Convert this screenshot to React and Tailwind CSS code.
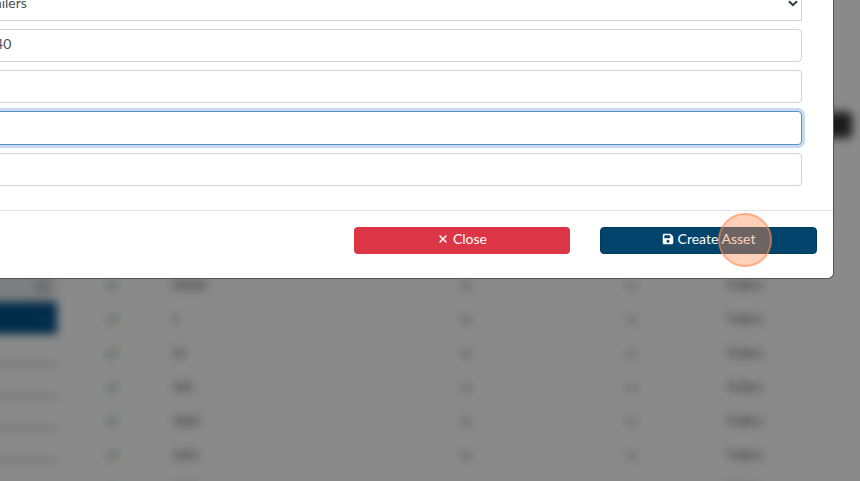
import React from 'react';
import { FaCheck } from 'react-icons/fa';
import { FaFloppyDisk, FaXmark } from 'react-icons/fa6';

const assets = [
  { id: '00000', type: 'Trailers' },
  { id: '1', type: 'Trailers' },
  { id: '10', type: 'Trailers' },
  { id: '100', type: 'Trailers' },
  { id: '1000', type: 'Trailers' },
  { id: '1001', type: 'Trailers' },
  { id: '1002', type: 'Trailers' },
];

const inputClass = 'block w-full h-[33px] px-3 pb-1 rounded border border-[#ced4da] bg-white text-sm text-[#495057] outline-none';

const Sidebar = () => (
  <nav className="-ml-4 w-[73px] shrink-0 pt-0.5 text-xs text-right">
    <a href="#all" className="block h-8 px-2 leading-8 bg-[#e6eaee] text-[#666]">All</a>
    <a href="#assets" className="block h-8 px-2 leading-8 bg-[#005088] text-[#2f6b98]">12</a>
    <a href="#units" className="block h-8 border-b-2 border-[#aaa]" aria-label="Units"></a>
    <a href="#drivers" className="block h-8 border-b-2 border-[#aaa]" aria-label="Drivers"></a>
    <a href="#sites" className="block h-8 border-b-2 border-[#aaa]" aria-label="Sites"></a>
    <a href="#reports" className="block h-8 border-b-2 border-[#aaa]" aria-label="Reports"></a>
  </nav>
);

const AssetTable = () => (
  <table className="flex-1 mx-2 table-fixed border-collapse text-xs text-[#333]">
    <colgroup>
      <col className="w-[12%]" />
      <col className="w-[28%]" />
      <col className="w-[22%]" />
      <col className="w-[20%]" />
      <col className="w-[18%]" />
    </colgroup>
    <tbody>
      {assets.map((asset) => (
        <tr key={asset.id} className="h-[34px] border-b border-[#eee]">
          <td className="border-r border-[#eee]"><FaCheck className="mx-auto size-3 text-[#5cb270]" /></td>
          <td className="border-r border-[#eee] px-3">{asset.id}</td>
          <td className="border-r border-[#eee] text-center text-[#777]">no</td>
          <td className="border-r border-[#eee] text-center text-[#888]">no</td>
          <td className="border-r border-[#eee] px-4">{asset.type}</td>
        </tr>
      ))}
    </tbody>
  </table>
);

const AssetDialog = () => (
  <div role="dialog" aria-label="Create Asset" className="-mt-3 -ml-[58px] mr-[26px] rounded-md border border-t-0 border-[#555] bg-white">
    <form className="flex flex-col gap-2 px-[31px] pb-6">
      <div className="relative">
        <select aria-label="Asset Type" className="block w-full h-[33px] px-2 pb-1 appearance-none border border-[#ced4da] bg-white text-sm text-[#495057] outline-none">
          <option>Trailers</option>
        </select>
        <svg viewBox="0 0 10 7" className="absolute right-1 top-3 w-[10px] h-[7px] pointer-events-none" fill="none" stroke="#343a40" strokeWidth="2">
          <path d="M1 1.2 5 5.2 9 1.2" />
        </svg>
      </div>
      <input aria-label="Asset Number" defaultValue="140" className={inputClass} />
      <input aria-label="Make" className={inputClass} />
      <input aria-label="Model" className="block w-full h-[34px] px-3 pb-1 rounded border border-[#5b93cc] bg-white text-sm text-[#495057] outline-none ring-3 ring-[#c8dbee]" />
      <input aria-label="Year" className={inputClass} />
    </form>
    <div className="flex justify-end gap-[30px] border-t border-[#dee2e6] px-4 pt-4 pb-6">
      <button type="button" className="flex w-[216px] h-[27px] items-center justify-center gap-1 rounded bg-[#dc3545] pb-1 text-sm text-white">
        <FaXmark className="size-3" />
        Close
      </button>
      <button type="button" className="relative flex w-[217px] h-[27px] items-center justify-center gap-1 rounded border border-[#003b60] bg-[#02446c] pb-1 text-sm text-white">
        <FaFloppyDisk className="size-3" />
        Create Asset
        <span className="absolute -top-[15px] right-11 size-[54px] rounded-full border-2 border-[#ff8a47]/50 bg-[#ff8f58]/42"></span>
      </button>
    </div>
  </div>
);

const App = () => {
  return (
    <div className="relative h-screen overflow-hidden bg-white font-['Lato',sans-serif]">
      <div className="flex flex-col blur-[5px]">
        <div className="flex h-[268px] justify-end px-2 pt-28">
          <button type="button" aria-label="Add" className="h-[26px] w-24 rounded bg-[#333]"></button>
        </div>
        <div className="flex items-start">
          <Sidebar />
          <AssetTable />
        </div>
      </div>
      <div className="absolute inset-0 flow-root bg-black/46">
        <AssetDialog />
      </div>
    </div>
  );
};

export default App;
